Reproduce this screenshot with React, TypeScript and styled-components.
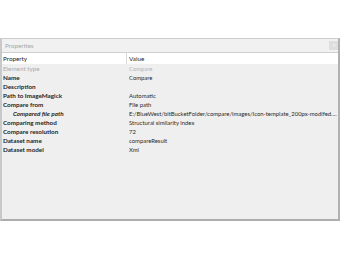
import React from "react";
import styled, { createGlobalStyle } from "styled-components";

const Global = createGlobalStyle`
  html, body { margin: 0; padding: 0; background: #ffffff; }
  body { font-family: Lato, "Noto Sans", sans-serif; }
`;

const Page = styled.div`
  padding-top: 38px;
  width: 340px;
`;

const Panel = styled.div`
  box-sizing: border-box;
  width: 340px;
  height: 183px;
  background: #efefef;
  border-top: 1px solid #cccccc;
  border-left: 2px solid #c9c9c9;
  border-right: 2px solid #b0b0b0;
  border-bottom: 2px solid #adadad;
  display: flex;
  flex-direction: column;
`;

const TitleBar = styled.div`
  height: 14px;
  box-sizing: border-box;
  background: #f1f1f1;
  border-bottom: 1px solid #cfcfcf;
  display: flex;
  align-items: center;
  justify-content: space-between;
  padding: 0 0 0 3px;
`;

const Title = styled.span`
  font-size: 6.3px;
  color: #a8a8a8;
`;

const CloseBtn = styled.div`
  width: 9px;
  height: 9px;
  background: #dedede;
  display: flex;
  align-items: center;
  justify-content: center;
  font-size: 5px;
  color: #f4f4f4;
  line-height: 1;
`;

const Grid = styled.div`
  display: grid;
  grid-template-columns: 124px minmax(0, 1fr);
`;

const HeadCell = styled.div<{ $divider?: boolean }>`
  background: #ffffff;
  height: 11px;
  display: flex;
  align-items: center;
  padding-left: ${(p) => (p.$divider ? "2px" : "1px")};
  border-left: ${(p) => (p.$divider ? "1px solid #d8d8d8" : "none")};
  font-size: 6.3px;
  color: #1e1e1e;
  white-space: nowrap;
`;

const Label = styled.div<{ $muted?: boolean; $indent?: boolean }>`
  height: 9px;
  display: flex;
  align-items: center;
  padding-left: ${(p) => (p.$indent ? "11px" : "1px")};
  font-size: 6.3px;
  font-weight: ${(p) => (p.$muted ? 400 : 700)};
  font-style: ${(p) => (p.$indent ? "italic" : "normal")};
  color: ${(p) => (p.$muted ? "#ababab" : "#1e1e1e")};
  white-space: nowrap;
`;

const Value = styled.div<{ $muted?: boolean }>`
  height: 9px;
  line-height: 9px;
  padding-left: 3px;
  padding-right: 1px;
  font-size: 5.9px;
  color: ${(p) => (p.$muted ? "#b4b4b4" : "#2a2a2a")};
  white-space: nowrap;
  overflow: hidden;
  text-overflow: ellipsis;
  min-width: 0;
`;

const rows: { label: string; value: string; muted?: boolean; indent?: boolean }[] = [
  { label: "Element type", value: "Compare", muted: true },
  { label: "Name", value: "Compare" },
  { label: "Description", value: "" },
  { label: "Path to ImageMagick", value: "Automatic" },
  { label: "Compare from", value: "File path" },
  {
    label: "Compared file path",
    value: "E:/BlueWest/bitBucketFolder/compare/images/Icon-template_200px-modifed....",
    indent: true,
  },
  { label: "Comparing method", value: "Structural similarity index" },
  { label: "Compare resolution", value: "72" },
  { label: "Dataset name", value: "compareResult" },
  { label: "Dataset model", value: "Xml" },
];

export default function App() {
  return (
    <Page>
      <Global />
      <Panel>
        <TitleBar>
          <Title>Properties</Title>
          <CloseBtn>✕</CloseBtn>
        </TitleBar>
        <Grid>
          <HeadCell>Property</HeadCell>
          <HeadCell $divider>Value</HeadCell>
          {rows.map((r) => (
            <React.Fragment key={r.label}>
              <Label $muted={r.muted} $indent={r.indent}>
                {r.label}
              </Label>
              <Value $muted={r.muted}>{r.value}</Value>
            </React.Fragment>
          ))}
        </Grid>
      </Panel>
    </Page>
  );
}
